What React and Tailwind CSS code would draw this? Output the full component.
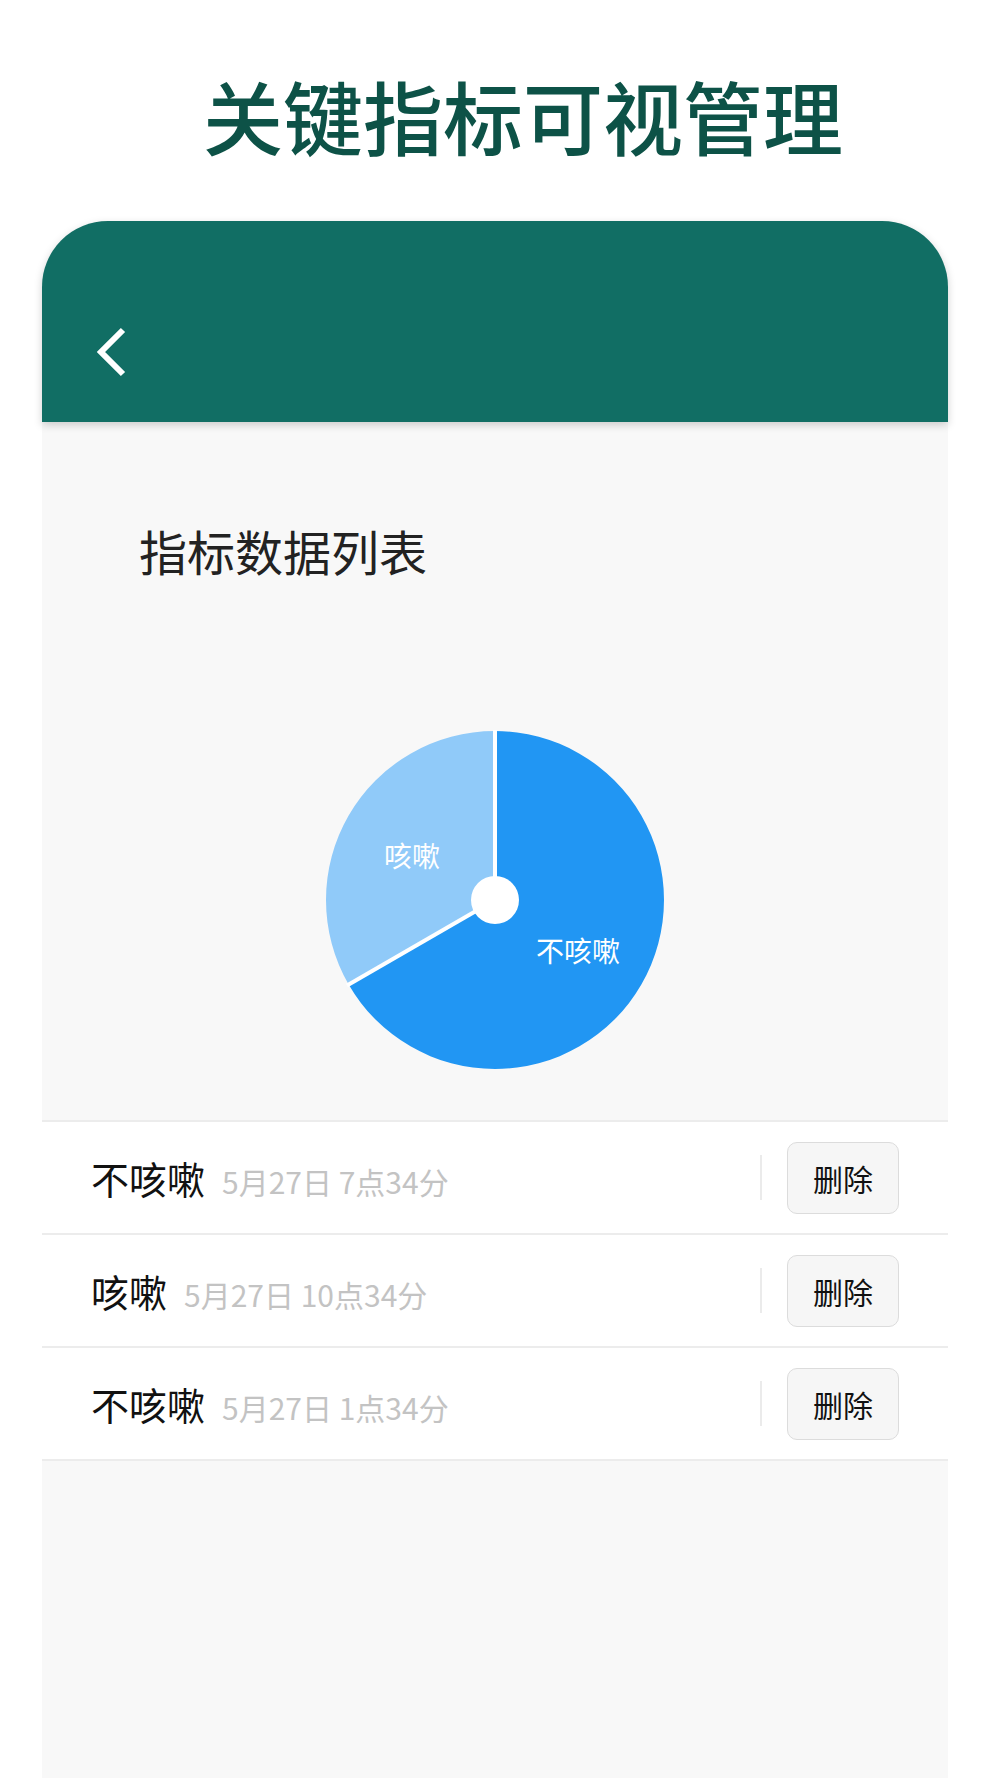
import React from "react";

const records = [
  { name: "不咳嗽", time: "5月27日 7点34分" },
  { name: "咳嗽", time: "5月27日 10点34分" },
  { name: "不咳嗽", time: "5月27日 1点34分" },
];

const PieChart = () => (
  <svg width="340" height="340" viewBox="0 0 340 340" className="block mx-auto">
    <path d="M170 170 L170 1 A169 169 0 1 1 23.64 254.5 Z" fill="#2196f3" />
    <path d="M170 170 L23.64 254.5 A169 169 0 0 1 170 1 Z" fill="#90caf9" />
    <line x1="170" y1="170" x2="170" y2="0" stroke="#fff" strokeWidth="4" />
    <line x1="170" y1="170" x2="22" y2="255.5" stroke="#fff" strokeWidth="4" />
    <circle cx="170" cy="170" r="24" fill="#fff" />
    <text x="87" y="125" fill="#fff" fontSize="28" textAnchor="middle" dominantBaseline="central">
      咳嗽
    </text>
    <text x="253" y="220" fill="#fff" fontSize="28" textAnchor="middle" dominantBaseline="central">
      不咳嗽
    </text>
  </svg>
);

const Row = ({ name, time }) => (
  <div className="h-[113px] flex items-center bg-white border-b-2 border-[#ececec] pl-[49px] pr-[49px]">
    <div className="flex items-baseline flex-1">
      <span className="text-[38px] leading-none text-[#111]">{name}</span>
      <span className="ml-[17px] text-[30px] leading-none text-[#c3c3c3]">{time}</span>
    </div>
    <div className="w-[2px] h-[45px] bg-[#ebebeb]" />
    <button className="ml-[25px] w-[112px] h-[72px] rounded-[10px] border border-[#dcdcdc] bg-[#f6f6f6] text-[30px] text-[#111] leading-none">
      删除
    </button>
  </div>
);

export default function App() {
  return (
    <div className="min-h-[1778px] bg-white flex flex-col font-['Noto_Sans_CJK_SC',sans-serif]">
      <div className="h-[221px] pt-[64px] pl-[46px] text-center">
        <h1 className="text-[80px] leading-[100px] font-medium text-[#0d5247]">关键指标可视管理</h1>
      </div>

      <div className="ml-[42px] w-[906px] flex-1 bg-[#f8f8f8] rounded-t-[66px] flex flex-col">
        <div className="relative z-10 h-[201px] bg-[#116e64] rounded-t-[66px] shadow-[0_3px_8px_rgba(0,0,0,0.18)] flex items-end pb-[45px] pl-[54px]">
          <svg width="32" height="50" viewBox="0 0 32 50" fill="none">
            <path d="M27 3 L5 25 L27 47" stroke="#fff" strokeWidth="6" strokeLinecap="butt" strokeLinejoin="miter" />
          </svg>
        </div>

        <div className="pl-[97px] mt-[97px]">
          <h2 className="text-[48px] leading-[62px] text-[#222]">指标数据列表</h2>
        </div>

        <div className="mt-[149px]">
          <PieChart />
        </div>

        <div className="mt-[50px] border-t-2 border-[#ececec]">
          {records.map((r, i) => (
            <Row key={i} name={r.name} time={r.time} />
          ))}
        </div>
      </div>
    </div>
  );
}
